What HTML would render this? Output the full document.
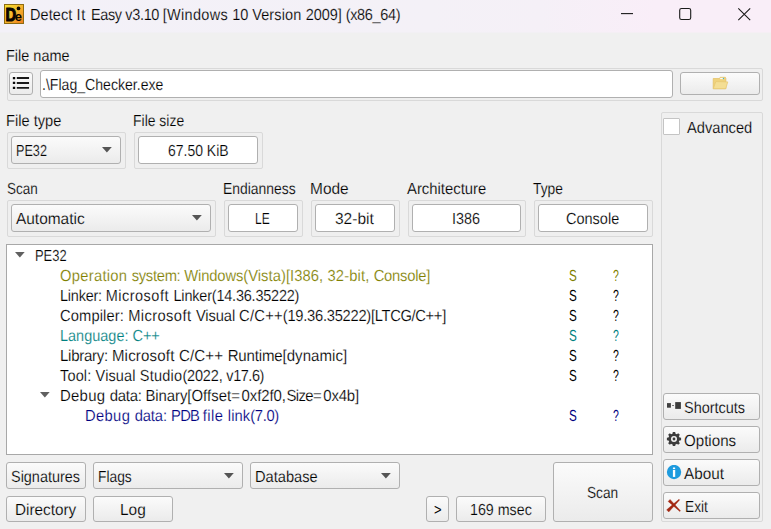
<!DOCTYPE html>
<html>
<head>
<meta charset="utf-8">
<title>Detect It Easy</title>
<style>
html,body{margin:0;padding:0;}
body{width:771px;height:529px;overflow:hidden;background:#f0f0f0;position:relative;
 font-family:"Liberation Sans",sans-serif;font-size:16px;color:#000;}
*{box-sizing:border-box;}
.abs{position:absolute;}
#titlebar{left:0;top:0;width:771px;height:33px;background:linear-gradient(90deg,#f3f1f8 0%,#f4f1f7 56%,#f5f0f7 70%,#f9eef8 85%,#f9eef8 100%);}
#titlebar2{left:0;top:32px;width:771px;height:1px;background:rgba(240,240,240,0.45);}
.t{position:absolute;white-space:nowrap;line-height:18px;height:18px;transform-origin:0 0;text-rendering:geometricPrecision;}
.grp{position:absolute;border:1px solid #d9d9d9;border-radius:2px;background:#efefef;}
.inp{position:absolute;border:1px solid #b0b0b0;border-radius:3px;background:#fff;}
.btn{position:absolute;border:1px solid #b0b0b0;border-radius:3px;background:linear-gradient(#fbfbfb,#ebebeb);}
.arrow{position:absolute;width:0;height:0;border-left:5px solid transparent;border-right:5px solid transparent;border-top:5px solid #505050;}
.tarrow{position:absolute;width:0;height:0;border-left:4.5px solid transparent;border-right:4.5px solid transparent;border-top:4.5px solid #5a5a5a;}
</style>
</head>
<body>
<div id="titlebar" class="abs"></div><div id="titlebar2" class="abs"></div>
<!-- app icon -->
<svg class="abs" style="left:4px;top:4px" width="20" height="20" viewBox="0 0 20 20">
 <defs><linearGradient id="ig" x1="0" y1="0" x2="1" y2="1"><stop offset="0" stop-color="#f6e232"/><stop offset="0.5" stop-color="#f5b52c"/><stop offset="1" stop-color="#ef7a1e"/></linearGradient></defs>
 <rect x="0.5" y="0.5" width="19" height="19" fill="url(#ig)" stroke="#8e6c12"/>
 <text x="1.6" y="16.6" font-family="Liberation Sans, sans-serif" font-weight="bold" font-size="17.5" textLength="10.6" lengthAdjust="spacingAndGlyphs" fill="#0a0500" stroke="#0a0500" stroke-width="1.1">D</text>
 <text x="10.8" y="17" font-family="Liberation Sans, sans-serif" font-weight="bold" font-size="13" fill="#0a0500">e</text>
 <circle cx="14.5" cy="4.4" r="1.85" fill="#0a0500"/>
</svg>
<!-- window controls -->
<svg class="abs" style="left:600px;top:0" width="171" height="32" viewBox="0 0 171 32">
 <path d="M21 13.6H33" stroke="#1a1a1a" stroke-width="1.1" fill="none"/>
 <rect x="79.7" y="8.5" width="11" height="11" rx="1.8" fill="none" stroke="#1a1a1a" stroke-width="1.1"/>
 <path d="M138.3 8.3L150.2 20.2M150.2 8.3L138.3 20.2" stroke="#1a1a1a" stroke-width="1.1" fill="none"/>
</svg>

<!-- file name -->
<div class="grp" style="left:7px;top:68px;width:756px;height:33px;"></div>
<div class="btn" style="left:9px;top:72px;width:24px;height:23px;"></div>
<svg class="abs" style="left:12px;top:76px" width="18" height="15" viewBox="0 0 18 15">
 <path d="M0.85 2.05h2.35M0.85 6.95h2.35M0.85 11.9h2.35" stroke="#0a0a0a" stroke-width="2.3"/>
 <path d="M4.8 2.05h12.25M4.8 6.95h12.25M4.8 11.9h12.25" stroke="#1a1a1a" stroke-width="1.9"/>
</svg>
<div class="inp" style="left:40px;top:70px;width:633px;height:28px;"></div>
<div class="btn" style="left:680px;top:72px;width:80px;height:23px;"></div>
<svg class="abs" style="left:712px;top:76px" width="17" height="14" viewBox="0 0 17 14">
 <path d="M1.2 2.5h6.4l0.5-1.2h5.3l0.5 1.2v10.2h-12.7z" fill="#efd27c" stroke="#e3c063" stroke-width="0.7"/>
 <rect x="8.2" y="1.9" width="3.6" height="1.2" fill="#fffdf5"/><circle cx="11.4" cy="2.5" r="0.65" fill="#3ab0d0"/>
 <path d="M3.8 5.6l12 0.3l-2.1 6.8h-12.4z" fill="#f4de94" stroke="#e6c670" stroke-width="0.7"/>
</svg>

<!-- file type / size -->
<div class="grp" style="left:7px;top:132px;width:119px;height:37px;"></div>
<div class="btn" style="left:11px;top:136px;width:110px;height:28px;"></div>
<svg class="abs" style="left:101.75px;top:147.00px" width="11" height="7" viewBox="0 0 11 7"><path d="M0 0h9.8l-4.9 5.6z" fill="#555"/></svg>
<div class="grp" style="left:134px;top:132px;width:129px;height:37px;"></div>
<div class="inp" style="left:138px;top:136px;width:120px;height:28px;"></div>

<!-- scan row -->
<div class="grp" style="left:7px;top:200px;width:209px;height:37px;"></div>
<div class="btn" style="left:11px;top:204px;width:200px;height:28px;"></div>
<svg class="abs" style="left:191.75px;top:215.00px" width="11" height="7" viewBox="0 0 11 7"><path d="M0 0h9.8l-4.9 5.6z" fill="#555"/></svg>
<div class="grp" style="left:224px;top:200px;width:79px;height:37px;"></div>
<div class="inp" style="left:228px;top:204px;width:70px;height:28px;"></div>
<div class="grp" style="left:311px;top:200px;width:89px;height:37px;"></div>
<div class="inp" style="left:315px;top:204px;width:80px;height:28px;"></div>
<div class="grp" style="left:408px;top:200px;width:118px;height:37px;"></div>
<div class="inp" style="left:412px;top:204px;width:109px;height:28px;"></div>
<div class="grp" style="left:534px;top:200px;width:119px;height:37px;"></div>
<div class="inp" style="left:538px;top:204px;width:110px;height:28px;"></div>

<!-- tree -->
<div class="abs" style="left:6px;top:244px;width:647px;height:211px;background:#fff;border:1px solid #a8a8a8;"></div>
<svg class="abs" style="left:14.75px;top:252.10px" width="11" height="7" viewBox="0 0 11 7"><path d="M0 0h9.7l-4.85 5.5z" fill="#606060"/></svg>
<svg class="abs" style="left:39.75px;top:392.10px" width="11" height="7" viewBox="0 0 11 7"><path d="M0 0h9.7l-4.85 5.5z" fill="#606060"/></svg>

<!-- bottom row -->
<div class="btn" style="left:6px;top:462px;width:80px;height:27px;"></div>
<div class="btn" style="left:93px;top:462px;width:150px;height:27px;"></div>
<svg class="abs" style="left:224.00px;top:473.00px" width="11" height="7" viewBox="0 0 11 7"><path d="M0 0h9.8l-4.9 5.6z" fill="#555"/></svg>
<div class="btn" style="left:250px;top:462px;width:150px;height:27px;"></div>
<svg class="abs" style="left:381.00px;top:473.00px" width="11" height="7" viewBox="0 0 11 7"><path d="M0 0h9.8l-4.9 5.6z" fill="#555"/></svg>
<div class="btn" style="left:6px;top:496px;width:80px;height:26px;"></div>
<div class="btn" style="left:93px;top:496px;width:80px;height:26px;"></div>
<div class="btn" style="left:426px;top:496px;width:23px;height:26px;"></div>
<div class="btn" style="left:456px;top:496px;width:90px;height:26px;"></div>
<div class="btn" style="left:553px;top:462px;width:100px;height:60px;"></div>

<!-- right panel -->
<div class="grp" style="left:661px;top:112px;width:102px;height:410px;"></div>
<div class="abs" style="left:663px;top:118px;width:17px;height:17px;background:#fff;border:1px solid #c4c4c4;border-radius:1px;"></div>

<div class="btn" style="left:663px;top:393px;width:97px;height:27px;"></div>
<svg class="abs" style="left:666px;top:400px" width="16" height="12" viewBox="0 0 16 12">
 <rect x="1" y="3.1" width="3.9" height="4.6" fill="#404040"/><rect x="6.2" y="5" width="1.7" height="0.9" fill="#505050"/><rect x="9.2" y="2.1" width="5.7" height="6.8" fill="#3c3c3c"/>
</svg>
<div class="btn" style="left:663px;top:426px;width:97px;height:27px;"></div>
<svg class="abs" style="left:666px;top:431px" width="16" height="16" viewBox="-8 -8 16 16">
 <g fill="#3c3c3c"><circle r="5.6"/>
 <g><path d="M-1.2 -7.1h2.4l0.5 3h-3.4z"/><path d="M-1.2 7.1h2.4l0.5 -3h-3.4z"/><path d="M-7.1 -1.2v2.4l3 0.5v-3.4z"/><path d="M7.1 -1.2v2.4l-3 0.5v-3.4z"/></g>
 <g transform="rotate(45)"><path d="M-1.2 -7.1h2.4l0.5 3h-3.4z"/><path d="M-1.2 7.1h2.4l0.5 -3h-3.4z"/><path d="M-7.1 -1.2v2.4l3 0.5v-3.4z"/><path d="M7.1 -1.2v2.4l-3 0.5v-3.4z"/></g></g>
 <circle r="3.0" fill="#f2f2f2"/><circle r="1.4" fill="#3c3c3c"/>
</svg>
<div class="btn" style="left:663px;top:459px;width:97px;height:27px;"></div>
<svg class="abs" style="left:666px;top:465px" width="16" height="16" viewBox="0 0 16 16">
 <circle cx="8.05" cy="7" r="7.15" fill="#1e9bde"/>
 <rect x="6.9" y="4.9" width="2.3" height="7" fill="#fff"/><rect x="6.9" y="2.4" width="2.3" height="1.7" rx="0.5" fill="#fff"/>
</svg>
<div class="btn" style="left:663px;top:492px;width:97px;height:27px;"></div>
<svg class="abs" style="left:666px;top:498px" width="16" height="16" viewBox="0 0 16 16">
 <g fill="#a32812" stroke="#a32812" stroke-width="0.4" stroke-linejoin="round" transform="translate(8.3,7.7) scale(0.93) translate(-8,-7.7)">
 <path d="M1.35 3.07L3.45 0.93L14.65 13.24L13.95 13.96z"/>
 <path d="M13.75 1.46L13.05 0.74L-0.22 12.15L2.02 14.45z"/></g>
</svg>

<div class="t" style="left:30.09px;top:7px;transform:scaleX(0.9056);-webkit-text-stroke:0.18px #f4f1f7;"><span style="letter-spacing:0.094px">Detect </span><span style="letter-spacing:0.855px">It </span><span style="letter-spacing:-0.393px">Easy v3.10 </span><span style="letter-spacing:0.339px">[Windows </span><span style="letter-spacing:-0.124px">10 </span><span style="letter-spacing:0.172px">Version </span><span style="letter-spacing:-0.072px">2009] </span><span style="letter-spacing:-0.361px">(x86_64)</span></div>
<div class="t" style="left:5.99px;top:48px;transform:scaleX(0.9055);-webkit-text-stroke:0.18px #f0f0f0;">File name</div>
<div class="t" style="left:41.92px;top:77px;transform:scaleX(0.8806);-webkit-text-stroke:0.18px #fff;">.\Flag_Checker.exe</div>
<div class="t" style="left:5.99px;top:113px;transform:scaleX(0.9149);-webkit-text-stroke:0.18px #f0f0f0;">File type</div>
<div class="t" style="left:133.13px;top:113px;transform:scaleX(0.8723);-webkit-text-stroke:0.18px #f0f0f0;">File size</div>
<div class="t" style="left:16.01px;top:143px;transform:scaleX(0.7897);-webkit-text-stroke:0.18px #f3f3f3;">PE32</div>
<div class="t" style="left:167.70px;top:143px;transform:scaleX(0.8732);-webkit-text-stroke:0.18px #fff;">67.50 KiB</div>
<div class="t" style="left:6.80px;top:181px;transform:scaleX(0.8406);-webkit-text-stroke:0.18px #f0f0f0;">Scan</div>
<div class="t" style="left:223.13px;top:181px;transform:scaleX(0.8691);-webkit-text-stroke:0.18px #f0f0f0;">Endianness</div>
<div class="t" style="left:309.83px;top:181px;transform:scaleX(0.9661);-webkit-text-stroke:0.18px #f0f0f0;">Mode</div>
<div class="t" style="left:407.30px;top:181px;transform:scaleX(0.9290);-webkit-text-stroke:0.18px #f0f0f0;">Architecture</div>
<div class="t" style="left:533.30px;top:181px;transform:scaleX(0.8623);-webkit-text-stroke:0.18px #f0f0f0;">Type</div>
<div class="t" style="left:16.10px;top:211px;transform:scaleX(0.9643);-webkit-text-stroke:0.18px #f3f3f3;">Automatic</div>
<div class="t" style="left:255.05px;top:211px;transform:scaleX(0.7543);-webkit-text-stroke:0.18px #fff;">LE</div>
<div class="t" style="left:334.70px;top:211px;transform:scaleX(0.9685);-webkit-text-stroke:0.18px #fff;">32-bit</div>
<div class="t" style="left:451.90px;top:211px;transform:scaleX(0.8994);-webkit-text-stroke:0.18px #fff;">I386</div>
<div class="t" style="left:565.70px;top:211px;transform:scaleX(0.9064);-webkit-text-stroke:0.18px #fff;">Console</div>
<div class="t" style="left:34.99px;top:248px;transform:scaleX(0.8080);-webkit-text-stroke:0.18px #fff;">PE32</div>
<div class="t" style="left:60.00px;top:268px;transform:scaleX(0.9220);color:#808000;-webkit-text-stroke:0.18px #fff;"><span style="letter-spacing:0.306px">Operation </span><span style="letter-spacing:-0.327px">system: </span><span style="letter-spacing:-0.134px">Windows</span><span style="letter-spacing:0.054px">(Vista)</span><span style="letter-spacing:0.080px">[I386, </span><span style="letter-spacing:0.150px">32-bit, </span><span style="letter-spacing:-0.234px">Console]</span></div>
<div class="t" style="left:60.10px;top:288px;transform:scaleX(0.9033);-webkit-text-stroke:0.18px #fff;"><span style="letter-spacing:-0.235px">Linker: </span><span style="letter-spacing:0.571px">Microsoft </span><span style="letter-spacing:-0.196px">Linker</span><span style="letter-spacing:-0.221px">(14.36.35222)</span></div>
<div class="t" style="left:59.60px;top:308px;transform:scaleX(0.9175);-webkit-text-stroke:0.18px #fff;"><span style="letter-spacing:0.140px">Compiler: </span><span style="letter-spacing:0.446px">Microsoft </span><span style="letter-spacing:-0.093px">Visual </span><span style="letter-spacing:0.273px">C/C++</span><span style="letter-spacing:-0.270px">(19.36.35222)</span><span style="letter-spacing:-0.342px">[LTCG/C++]</span></div>
<div class="t" style="left:60.10px;top:328px;transform:scaleX(0.9039);color:#008080;-webkit-text-stroke:0.18px #fff;"><span style="letter-spacing:0.014px">Language: </span><span style="letter-spacing:-0.069px">C++</span></div>
<div class="t" style="left:60.06px;top:348px;transform:scaleX(0.9391);-webkit-text-stroke:0.18px #fff;"><span style="letter-spacing:-0.281px">Library: </span><span style="letter-spacing:0.204px">Microsoft </span><span style="letter-spacing:0.188px">C/C++ </span><span style="letter-spacing:-0.175px">Runtime</span><span style="letter-spacing:0.074px">[dynamic]</span></div>
<div class="t" style="left:60.00px;top:368px;transform:scaleX(0.9055);-webkit-text-stroke:0.18px #fff;"><span style="letter-spacing:0.179px">Tool: </span><span style="letter-spacing:0.139px">Visual </span><span style="letter-spacing:0.297px">Studio</span><span style="letter-spacing:-0.189px">(2022, </span><span style="letter-spacing:-0.501px">v17.6)</span></div>
<div class="t" style="left:60.37px;top:388px;transform:scaleX(0.9322);-webkit-text-stroke:0.18px #fff;"><span style="letter-spacing:0.293px">Debug </span><span style="letter-spacing:-0.295px">data: </span><span style="letter-spacing:-0.067px">Binary</span><span style="letter-spacing:0.026px">[Offset</span><span style="letter-spacing:1.813px">=</span><span style="letter-spacing:-0.065px">0xf2f0</span><span style="letter-spacing:0.524px">,</span><span style="letter-spacing:-0.701px">Size</span><span style="letter-spacing:1.813px">=</span><span style="letter-spacing:-0.180px">0x4b]</span></div>
<div class="t" style="left:85.38px;top:408px;transform:scaleX(0.9210);color:#000080;-webkit-text-stroke:0.18px #fff;"><span style="letter-spacing:0.381px">Debug </span><span style="letter-spacing:-0.089px">data: </span><span style="letter-spacing:-0.753px">PDB </span><span style="letter-spacing:0.488px">file </span><span style="letter-spacing:0.106px">link</span><span style="letter-spacing:-0.401px">(7.0)</span></div>
<div class="t" style="left:11.00px;top:469px;transform:scaleX(0.9021);-webkit-text-stroke:0.18px #f3f3f3;">Signatures</div>
<div class="t" style="left:97.94px;top:469px;transform:scaleX(0.8630);-webkit-text-stroke:0.18px #f3f3f3;">Flags</div>
<div class="t" style="left:254.88px;top:469px;transform:scaleX(0.9158);-webkit-text-stroke:0.18px #f3f3f3;">Database</div>
<div class="t" style="left:14.84px;top:502px;transform:scaleX(0.9554);-webkit-text-stroke:0.18px #f3f3f3;">Directory</div>
<div class="t" style="left:119.84px;top:502px;transform:scaleX(0.9638);-webkit-text-stroke:0.18px #f3f3f3;">Log</div>
<div class="t" style="left:434.00px;top:502px;transform:scaleX(0.8111);">&gt;</div>
<div class="t" style="left:469.91px;top:502px;transform:scaleX(0.8908);-webkit-text-stroke:0.18px #f3f3f3;">169 msec</div>
<div class="t" style="left:587.30px;top:485px;transform:scaleX(0.8546);-webkit-text-stroke:0.18px #f3f3f3;">Scan</div>
<div class="t" style="left:686.70px;top:120px;transform:scaleX(0.9165);-webkit-text-stroke:0.18px #f0f0f0;">Advanced</div>
<div class="t" style="left:684.00px;top:400px;transform:scaleX(0.9040);-webkit-text-stroke:0.18px #f3f3f3;">Shortcuts</div>
<div class="t" style="left:684.00px;top:433px;transform:scaleX(0.9449);-webkit-text-stroke:0.18px #f3f3f3;">Options</div>
<div class="t" style="left:684.30px;top:466px;transform:scaleX(0.9536);-webkit-text-stroke:0.18px #f3f3f3;">About</div>
<div class="t" style="left:685.14px;top:499px;transform:scaleX(0.8579);-webkit-text-stroke:0.18px #f3f3f3;">Exit</div>
<div class="t" style="left:569.30px;top:268px;transform:scaleX(0.7300);color:#808000;">S</div>
<div class="t" style="left:612.80px;top:268px;transform:scaleX(0.6556);color:#808000;">?</div>
<div class="t" style="left:569.30px;top:288px;transform:scaleX(0.7300);">S</div>
<div class="t" style="left:612.80px;top:288px;transform:scaleX(0.6556);">?</div>
<div class="t" style="left:569.30px;top:308px;transform:scaleX(0.7300);">S</div>
<div class="t" style="left:612.80px;top:308px;transform:scaleX(0.6556);">?</div>
<div class="t" style="left:569.30px;top:328px;transform:scaleX(0.7300);color:#008080;">S</div>
<div class="t" style="left:612.80px;top:328px;transform:scaleX(0.6556);color:#008080;">?</div>
<div class="t" style="left:569.30px;top:348px;transform:scaleX(0.7300);">S</div>
<div class="t" style="left:612.80px;top:348px;transform:scaleX(0.6556);">?</div>
<div class="t" style="left:569.30px;top:368px;transform:scaleX(0.7300);">S</div>
<div class="t" style="left:612.80px;top:368px;transform:scaleX(0.6556);">?</div>
<div class="t" style="left:569.30px;top:408px;transform:scaleX(0.7300);color:#000080;">S</div>
<div class="t" style="left:612.80px;top:408px;transform:scaleX(0.6556);color:#000080;">?</div>

</body>
</html>
